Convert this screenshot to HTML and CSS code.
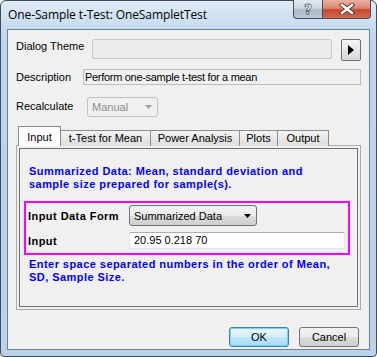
FILE: index.html
```html
<!DOCTYPE html>
<html lang="en">
<head>
    <meta charset="UTF-8">
    <title>One-Sample t-Test</title>
    <link rel="stylesheet" href="styles.css">
</head>
<body>
    <div class="window">
        <div class="titlebar">
            <span class="title">One-Sample t-Test: OneSampletTest</span>
            <div class="caption-btns">
                <div class="cap-btn help">?</div>
                <div class="cap-btn close">
                    <svg width="16" height="12" viewBox="0 0 16 12">
                        <path d="M3 2 L13 10 M13 2 L3 10" stroke="#4a3430" stroke-width="4.2" stroke-linecap="square"/>
                        <path d="M3 2 L13 10 M13 2 L3 10" stroke="#fff" stroke-width="2.4" stroke-linecap="square"/>
                    </svg>
                </div>
            </div>
        </div>

        <div class="client">
            <div class="row theme-row">
                <span class="label theme-label">Dialog Theme</span>
                <div class="theme-box"></div>
                <div class="arrow-btn">
                    <svg width="6" height="10" viewBox="0 0 6 10"><path d="M0 0 L6 5 L0 10 Z" fill="#000"/></svg>
                </div>
            </div>

            <div class="row desc-row">
                <span class="label desc-label">Description</span>
                <div class="desc-box">Perform one-sample t-test for a mean</div>
            </div>

            <div class="row recalc-row">
                <span class="label recalc-label">Recalculate</span>
                <div class="combo disabled">
                    <span>Manual</span>
                    <svg width="7" height="4" viewBox="0 0 7 4"><path d="M0 0 L7 0 L3.5 4 Z" fill="#a0a0a0"/></svg>
                </div>
            </div>

            <div class="tabs">
                <div class="tab active tab-input">Input</div>
                <div class="tab tab-ttest">t-Test for Mean</div>
                <div class="tab tab-power">Power Analysis</div>
                <div class="tab tab-plots">Plots</div>
                <div class="tab tab-output">Output</div>
            </div>

            <div class="tab-panel">
                <div class="group">
                    <p class="note">Summarized Data: Mean, standard deviation and<br>sample size prepared for sample(s).</p>

                    <div class="highlight">
                        <div class="field-row">
                            <span class="field-label">Input Data Form</span>
                            <div class="combo data-form">
                                <span>Summarized Data</span>
                                <svg width="7" height="4" viewBox="0 0 7 4"><path d="M0 0 L7 0 L3.5 4 Z" fill="#000"/></svg>
                            </div>
                        </div>
                        <div class="field-row input-row">
                            <span class="field-label">Input</span>
                            <div class="edit">20.95 0.218 70</div>
                        </div>
                    </div>

                    <p class="note after">Enter space separated numbers in the order of Mean,<br>SD, Sample Size.</p>
                </div>
            </div>

            <div class="buttons">
                <button class="btn default">OK</button>
                <button class="btn">Cancel</button>
            </div>
        </div>
    </div>
</body>
</html>
```

FILE: styles.css
```css
* {
    box-sizing: border-box;
}

body {
    margin: 0;
    font-family: "Liberation Sans", Arial, sans-serif;
    font-size: 11px;
    color: #000;
    background: #fff;
}

.window {
    width: 377px;
    height: 357px;
    border: 1px solid #3e4b5b;
    border-radius: 6px 6px 4px 4px;
    background: linear-gradient(180deg, #e0ebf7 0px, #cddff1 20px, #bfd5ed 40px, #bbd2eb 100%);
    display: flex;
    flex-direction: column;
}

.titlebar {
    height: 28px;
    display: flex;
    align-items: flex-start;
    justify-content: space-between;
}

.title {
    font-family: "Open Sans", "Noto Sans", sans-serif;
    font-size: 12px;
    line-height: 16px;
    padding: 6px 0 0 7px;
    color: #000;
    letter-spacing: -0.1px;
}

.caption-btns {
    display: flex;
    margin-top: -1px;
    margin-right: 5px;
}

.cap-btn {
    height: 19px;
    border: 1px solid #46505c;
    border-top: none;
    display: flex;
    align-items: center;
    justify-content: center;
}

.help {
    width: 29px;
    border-radius: 0 0 0 4px;
    border-right: none;
    background: linear-gradient(180deg, #e3e9f0 0%, #ccd6e1 45%, #adbac8 55%, #bcc8d6 100%);
    font-family: "DejaVu Sans", sans-serif;
    font-weight: bold;
    font-size: 14px;
    color: #fff;
    -webkit-text-stroke: 0.8px #56606c;
    padding-bottom: 1px;
}

.close {
    width: 49px;
    border-radius: 0 0 4px 0;
    background: linear-gradient(180deg, #eab0a2 0%, #dc8570 45%, #c9462e 55%, #d26a4f 100%);
}

.client {
    margin-left: 6px;
    width: 363px;
    height: 321px;
    border: 1px solid #6f8092;
    background: #f0f0f0;
    padding: 9px 0 0 8px;
}

.row {
    display: flex;
    align-items: flex-start;
}

.label {
    line-height: 14px;
}

.theme-label {
    width: 76px;
    line-height: 14px;
}

.theme-box {
    width: 240px;
    height: 20px;
    border: 1px solid #c9c9c9;
    border-radius: 2px;
    background: #ececec;
}

.arrow-btn {
    width: 20px;
    height: 22px;
    margin-left: 9px;
    border: 1px solid #707070;
    border-radius: 2px;
    background: linear-gradient(180deg, #f6f6f6, #e6e6e6 50%, #d8d8d8);
    display: flex;
    align-items: center;
    justify-content: center;
}

.desc-row {
    margin-top: 8px;
}

.desc-label {
    width: 67px;
    line-height: 16px;
}

.desc-box {
    width: 278px;
    height: 16px;
    border: 1px solid #bdbdbd;
    background: #f0f0f0;
    line-height: 14px;
    padding-left: 1px;
    letter-spacing: -0.3px;
}

.recalc-row {
    margin-top: 12px;
}

.recalc-label {
    width: 71px;
    line-height: 19px;
}

.combo {
    display: flex;
    align-items: center;
    justify-content: space-between;
    border-radius: 3px;
    padding: 0 5px 0 4px;
}

.combo.disabled {
    width: 71px;
    height: 20px;
    border: 1px solid #c2c2c2;
    background: #f0f0f0;
    color: #8d8d8d;
}

.combo.data-form {
    width: 128px;
    height: 21px;
    border: 1px solid #707070;
    background: linear-gradient(180deg, #f2f2f2, #ebebeb 50%, #dddddd 51%, #cfcfcf);
}

.tabs {
    display: flex;
    align-items: flex-end;
    height: 20px;
    margin: 9px 0 -1px 2px;
    position: relative;
    z-index: 1;
}

.tab {
    height: 16px;
    border: 1px solid #898c95;
    border-bottom: none;
    background: linear-gradient(180deg, #f3f3f3, #e8e8e8 50%, #dedede);
    text-align: center;
    line-height: 15px;
    margin-left: -1px;
    white-space: nowrap;
}

.tab.active {
    height: 20px;
    padding-top: 3px;
    background: #fff;
    margin-left: 0;
}

.tab-input {
    width: 43px;
}

.tab-ttest {
    width: 91px;
}

.tab-power {
    width: 90px;
}

.tab-plots {
    width: 39px;
}

.tab-output {
    width: 52px;
}

.tab-panel {
    width: 345px;
    height: 165px;
    border: 1px solid #a9a9a9;
    padding: 2px;
}

.group {
    height: 100%;
    border: 1px solid #6e6e6e;
    padding: 16px 0 0 4px;
}

.note {
    margin: 0;
    padding-left: 5px;
    color: #0000ff;
    font-weight: bold;
    line-height: 13px;
    letter-spacing: 0.45px;
}

.note.after {
    margin-top: 3px;
}

.highlight {
    width: 326px;
    margin-top: 10px;
    border: 2px solid #ff00ff;
    padding: 2px 0 4px 2px;
}

.field-row {
    display: flex;
    align-items: center;
}

.input-row {
    margin-top: 6px;
}

.field-label {
    width: 101px;
    font-weight: bold;
    letter-spacing: 0.45px;
}

.edit {
    width: 216px;
    height: 17px;
    border: 1px solid #e3e9ef;
    border-top-color: #abadb3;
    background: #fff;
    line-height: 15px;
    padding-left: 4px;
}

.buttons {
    display: flex;
    justify-content: flex-end;
    gap: 10px;
    margin-top: 17px;
    padding-right: 10px;
}

.btn {
    width: 60px;
    height: 20px;
    font-family: "Liberation Sans", Arial, sans-serif;
    font-size: 11px;
    color: #000;
    border: 1px solid #707070;
    border-radius: 3px;
    background: linear-gradient(180deg, #f2f2f2, #ebebeb 50%, #dddddd 51%, #cfcfcf);
    padding: 0;
}

.btn.default {
    border-color: #3c7fb1;
    box-shadow: inset 0 0 0 1px #7dd0f4;
    background: linear-gradient(180deg, #eaf6fd, #d9f0fc 50%, #bee6fd 51%, #a7d9f5);
}
```
